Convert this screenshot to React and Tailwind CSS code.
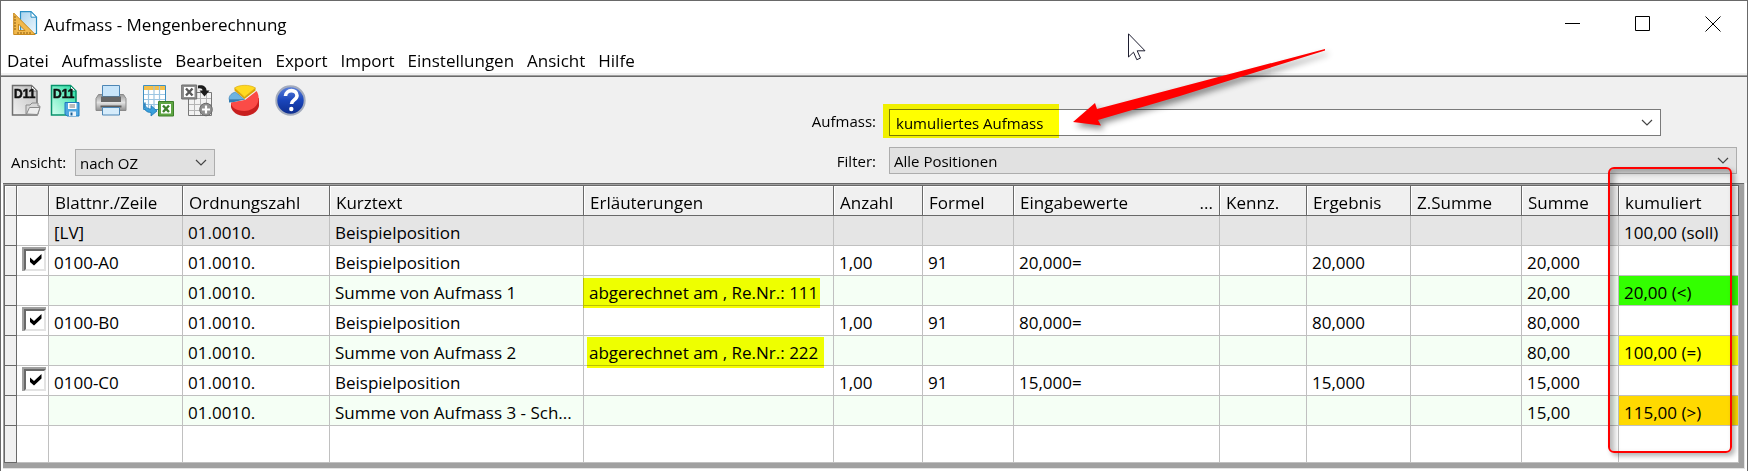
import React from 'react';

const menuItems = ['Datei', 'Aufmassliste', 'Bearbeiten', 'Export', 'Import', 'Einstellungen', 'Ansicht', 'Hilfe'];

const columns = [
  { key: 'marker', width: 'w-3' },
  { key: 'check', width: 'w-8' },
  { key: 'blatt', label: 'Blattnr./Zeile', width: 'w-[134px]' },
  { key: 'oz', label: 'Ordnungszahl', width: 'w-[147px]' },
  { key: 'kurztext', label: 'Kurztext', width: 'w-[254px]' },
  { key: 'info', label: 'Erläuterungen', width: 'w-[250px]' },
  { key: 'anzahl', label: 'Anzahl', width: 'w-[89px]' },
  { key: 'formel', label: 'Formel', width: 'w-[91px]' },
  { key: 'eingabe', label: 'Eingabewerte', more: true, width: 'w-[206px]' },
  { key: 'kennz', label: 'Kennz.', width: 'w-[87px]' },
  { key: 'ergebnis', label: 'Ergebnis', width: 'w-[104px]' },
  { key: 'zsumme', label: 'Z.Summe', width: 'w-[111px]' },
  { key: 'summe', label: 'Summe', width: 'w-[97px]' },
  { key: 'kumuliert', label: 'kumuliert', width: 'w-[120px]' }
];

const dataColumns = columns.slice(2);

const rows = [
  { type: 'lv', blatt: '[LV]', oz: '01.0010.', kurztext: 'Beispielposition', kumuliert: '100,00 (soll)' },
  { type: 'pos', blatt: '0100-A0', oz: '01.0010.', kurztext: 'Beispielposition', anzahl: '1,00', formel: '91', eingabe: '20,000=', ergebnis: '20,000', summe: '20,000' },
  { type: 'sum', oz: '01.0010.', kurztext: 'Summe von Aufmass 1', info: 'abgerechnet am , Re.Nr.: 111', mark: '-left-px top-0.5 h-[30px]', summe: '20,00', kumuliert: '20,00 (<)', status: 'bg-[#33ff00]' },
  { type: 'pos', blatt: '0100-B0', oz: '01.0010.', kurztext: 'Beispielposition', anzahl: '1,00', formel: '91', eingabe: '80,000=', ergebnis: '80,000', summe: '80,000' },
  { type: 'sum', oz: '01.0010.', kurztext: 'Summe von Aufmass 2', info: 'abgerechnet am , Re.Nr.: 222', mark: 'left-[3px] top-px h-[31px]', summe: '80,00', kumuliert: '100,00 (=)', status: 'bg-[#ffff00]' },
  { type: 'pos', blatt: '0100-C0', oz: '01.0010.', kurztext: 'Beispielposition', anzahl: '1,00', formel: '91', eingabe: '15,000=', ergebnis: '15,000', summe: '15,000' },
  { type: 'sum', oz: '01.0010.', kurztext: 'Summe von Aufmass 3 - Sch...', summe: '15,00', kumuliert: '115,00 (>)', status: 'bg-[#ffd900]' }
];

const rowColors = {
  lv: 'bg-[#e5e5e5]',
  pos: 'bg-white',
  sum: 'bg-[#f5fff5]'
};

const AppIcon = () => (
  <svg width="25" height="25" viewBox="0 0 25 25" aria-hidden="true">
    <defs>
      <linearGradient id="sheet" x1="0" y1="0" x2="1" y2="1">
        <stop offset="0" stopColor="#a9d3ee" />
        <stop offset="1" stopColor="#eef8fe" />
      </linearGradient>
    </defs>
    <path d="M7.5.7H18l5.500 5.500v16.300h-16z" fill="url(#sheet)" stroke="#2b8fc4" strokeWidth="1.2" />
    <path d="M18 .7v5.500h5.500z" fill="#fff" stroke="#2b8fc4" strokeWidth="1" />
    <path d="M.7 2v21.500h21.500z M5.500 13v6.500h6.500z" fill="#f2b94d" fillRule="evenodd" stroke="#c98a1d" strokeWidth="1" />
    <path d="M1 6h2M1 9h2M1 12h2M1 15h2M1 18h2M5 23v-2M8 23v-2M11 23v-2M14 23v-2M17 23v-2" stroke="#8a5c10" strokeWidth="1" />
  </svg>
);

const DocIcon = ({ id, from, to, edge, children }) => (
  <svg width="30" height="33" viewBox="0 0 30 33" aria-hidden="true">
    <defs>
      <linearGradient id={id} x1="1" y1="0" x2="0" y2="1">
        <stop offset="0" stopColor={from} />
        <stop offset="1" stopColor={to} />
      </linearGradient>
    </defs>
    <path d="M1.500 1.500h19l5.500 5.500v24h-24.500z" fill={`url(#${id})`} stroke={edge} strokeWidth="1.5" />
    <path d="M20.500 1.500v5.500h5.500z" fill="#fff" stroke={edge} />
    <text x="3" y="14" fontFamily="'Liberation Sans', sans-serif" fontSize="12" fontWeight="700" fill="#111" stroke="#111" strokeWidth=".5">D11</text>
    {children}
  </svg>
);

const OpenIcon = () => (
  <DocIcon id="docOpen" from="#bdbdbd" to="#f2f2f2" edge="#6e6e6e">
    <path d="M15 30.500v-9.500h4l2-2h6v3h2l-2 8.500z" fill="#d6d6d6" stroke="#8a8a8a" />
    <path d="M15.500 30l3-6.500h10.500l-2.500 7z" fill="#ededed" stroke="#8a8a8a" />
  </DocIcon>
);

const SaveIcon = () => (
  <DocIcon id="docSave" from="#22dda0" to="#d5fff0" edge="#07936c">
    <path d="M15 18.500h14v13.500h-12l-2-2z" fill="#4ea6e0" stroke="#1d7cc0" />
    <path d="M18 19h8.500v6h-8.500z" fill="#fff" />
    <path d="M19.500 21h5.500M19.500 23h5.500" stroke="#777" />
    <path d="M19 27.500h7v4.500h-7z" fill="#e8f3fb" />
    <path d="M20.500 28.500h2v3h-2z" fill="#1d5f95" />
  </DocIcon>
);

const PrinterIcon = () => (
  <svg width="32" height="33" viewBox="0 0 32 33" aria-hidden="true">
    <defs>
      <linearGradient id="printer" x1="0" y1="0" x2="0" y2="1">
        <stop offset="0" stopColor="#9a9a9a" />
        <stop offset=".5" stopColor="#e2e2e2" />
        <stop offset="1" stopColor="#8f8f8f" />
      </linearGradient>
    </defs>
    <path d="M3.500 10.500h25l2.500 4v12H1v-12z" fill="url(#printer)" stroke="#8a8a8a" />
    <path d="M7.500 1.500h17v11h-17z" fill="#c8e5fa" stroke="#4d86b5" />
    <path d="M6 12.500h20v5.500H6z" fill="#666" />
    <path d="M5.500 21.500h21v2h-21z" fill="#5c5c5c" />
    <path d="M7.500 23.500h17v7.500h-17z" fill="#d6ecfb" stroke="#4d86b5" />
  </svg>
);

const ExcelExportIcon = () => (
  <svg width="32" height="33" viewBox="0 0 32 33" aria-hidden="true">
    <path d="M1.500 1.500h22v24h-22z" fill="#fff" stroke="#3d8fc2" />
    <path d="M2 2h21v4H2z" fill="#f5c04a" />
    <path d="M2 10.500h21M2 15.500h21M2 20.500h21M6.500 6v19M12 2v23M17.500 2v23" stroke="#9cc5e2" strokeWidth="1.2" />
    <path d="M3 18.500c0 5 3 6.500 6 6.500v-3.500l6 5.500-6 5v-3.500c-5 0-8-3-6-10z" fill="#3aa0dc" stroke="#1b75b3" strokeWidth=".8" />
    <path d="M16.500 17.500h15v14.500h-15z" fill="#5fa544" stroke="#3c7f29" />
    <path d="M19 20h10v9.500H19z" fill="#fff" />
    <path d="M21 21.500l6 6.500M27 21.500l-6 6.500" stroke="#3c7f29" strokeWidth="2.4" />
  </svg>
);

const ExcelImportIcon = () => (
  <svg width="32" height="33" viewBox="0 0 32 33" aria-hidden="true">
    <path d="M7.500 8.500h23v23h-23z" fill="#f3f3f3" stroke="#777" />
    <path d="M8 14.500h22M8 20.500h22M8 26.500h22M13.500 9v22M19.500 9v22M25.500 9v22" stroke="#b5b5b5" />
    <path d="M.7 1h15v14h-15z" fill="#909090" stroke="#6a6a6a" />
    <path d="M3 3h10.500v10H3z" fill="#fff" />
    <path d="M5 4.500l6.500 7M11.500 4.500l-6.500 7" stroke="#5a5a5a" strokeWidth="2.4" />
    <path d="M17 1.500c5-1 8.500 1 8.500 5h3l-5 6-5-6h3c0-2-2-2.500-4.500-2z" fill="#1c1c1c" />
    <circle cx="25" cy="25.500" r="6.3" fill="#909090" stroke="#6a6a6a" />
    <path d="M25 21.500v8M21 25.500h8" stroke="#fff" strokeWidth="2.2" />
  </svg>
);

const ChartIcon = () => (
  <svg width="32" height="33" viewBox="0 0 32 33" aria-hidden="true">
    <path d="M3 19v4c1 5 7 9 13.500 9S30 28 31 22v-8z" fill="#c81f1f" />
    <path d="M17 16L28.500 7c4.500 6 2.500 19.500-12 20C8 27 3 23 3 18.500z" fill="#fb4b47" />
    <path d="M1 15.500C1 11 4 9 7.500 8l9 7.500z" fill="#6db3e2" stroke="#2f7bb2" strokeWidth=".6" />
    <path d="M1 15.500v3l5-.5 10.500-2.500z" fill="#2f7bb2" />
    <path d="M6.500 4C11 .5 22 .3 27.500 4L16.500 13z" fill="#ffd91f" stroke="#d7a500" strokeWidth=".6" />
    <path d="M6.500 4v2.500l10 8.500 11-8.500V4l-11 9z" fill="#dba400" />
  </svg>
);

const HelpIcon = () => (
  <svg width="32" height="33" viewBox="0 0 32 33" aria-hidden="true">
    <defs>
      <linearGradient id="ball" x1="0" y1="0" x2="0" y2="1">
        <stop offset="0" stopColor="#5f83dc" />
        <stop offset=".5" stopColor="#1a45ba" />
        <stop offset="1" stopColor="#0d2c8c" />
      </linearGradient>
    </defs>
    <circle cx="15.500" cy="16.500" r="14.200" fill="url(#ball)" stroke="#a3abbd" strokeWidth="2" />
    <path d="M10.500 12c.3-7 11.500-7.200 11.500-.5 0 4.500-5.500 4.200-5.500 8.500" fill="none" stroke="#fff" strokeWidth="3.6" />
    <circle cx="16.300" cy="25" r="2.200" fill="#fff" />
  </svg>
);

const Select = ({ id, value, className }) => (
  <div className={`relative ${className}`}>
    <select id={id} className="block h-full w-full appearance-none bg-transparent px-1 text-[15px] leading-6 outline-none" defaultValue={value}>
      <option>{value}</option>
    </select>
    <svg className="pointer-events-none absolute right-[7px] top-[9px]" width="12" height="8" viewBox="0 0 12 8" aria-hidden="true">
      <path d="M1 1l5 5 5-5" fill="none" stroke="#444" strokeWidth="1.2" />
    </svg>
  </div>
);

const ToolButton = ({ label, icon: Icon }) => (
  <button type="button" aria-label={label} className="block">
    <Icon />
  </button>
);

const CheckCell = ({ row }) => (
  <td className="border-b border-r border-[#c0c0c0] bg-white p-0 align-top">
    {row.type === 'pos' && (
      <div className="relative ml-[5px] mt-px h-6 w-6 border-2 border-b-0 border-r-0 border-[#a0a0a0]">
        <input
          type="checkbox"
          defaultChecked
          aria-label={row.blatt}
          className="block h-[22px] w-[22px] appearance-none border-2 border-[#696969] border-b-[#e3e3e3] border-r-[#e3e3e3] bg-white"
        />
        <svg className="pointer-events-none absolute left-[6px] top-[5px]" width="12" height="12" viewBox="0 0 12 12" aria-hidden="true">
          <path d="M0 3.500l4 3.500 7.500-7v4.500L4 11.500 0 8z" fill="#000" />
        </svg>
      </div>
    )}
  </td>
);

const MassTable = () => (
  <table className="w-full table-fixed border-separate border-spacing-0 bg-white text-[17px] leading-6">
    <colgroup>
      {columns.map(col => <col key={col.key} className={col.width} />)}
    </colgroup>
    <thead>
      <tr className="h-[30px]">
        {columns.map(col => (
          <th key={col.key} className="border-b border-r border-[#696969] bg-[#f0f0f0] p-0 text-left align-top font-normal shadow-[inset_1px_1px_0_#fff]">
            <div className="flex justify-between whitespace-nowrap px-1.5 pt-[5px]">
              <span>{col.label}</span>
              {col.more && <span>...</span>}
            </div>
          </th>
        ))}
      </tr>
    </thead>
    <tbody>
      {rows.map((row, idx) => (
        <tr key={idx} className="h-[30px]">
          <td className="border-b border-r border-[#696969] bg-[#f0f0f0] p-0"></td>
          <CheckCell row={row} />
          {dataColumns.map(col => (
            <td
              key={col.key}
              className={`relative border-b border-r border-[#c0c0c0] p-0 align-top ${col.key === 'kumuliert' && row.status ? row.status : rowColors[row.type]}`}
            >
              <div className="whitespace-nowrap pl-[5px] pt-[5px]">{row[col.key]}</div>
              {col.key === 'info' && row.mark && (
                <span className={`absolute z-10 w-[237px] bg-[#f8ff00] mix-blend-multiply ${row.mark}`}></span>
              )}
            </td>
          ))}
        </tr>
      ))}
      <tr className="h-[37px]">
        <td className="border-b border-r border-[#696969] bg-[#f0f0f0] p-0"></td>
        {columns.slice(1).map(col => <td key={col.key} className="border-b border-r border-[#c0c0c0] p-0"></td>)}
      </tr>
    </tbody>
  </table>
);

// Red arrow pointing at the selected Aufmass
const Arrow = () => (
  <svg className="pointer-events-none absolute left-[1059px] top-[39px] overflow-visible" width="280" height="100" viewBox="1060 40 280 100" aria-hidden="true">
    <path
      d="M1325 49L1097 109L1095 103L1073 122L1101 125.500L1098 120L1180 96L1325 50.500z"
      fill="#ff0000"
      className="drop-shadow-[3px_4px_3px_rgba(0,0,0,0.45)]"
    />
  </svg>
);

const Pointer = () => (
  <svg className="pointer-events-none absolute left-[1127px] top-8" width="19" height="28" viewBox="0 0 19 28" aria-hidden="true">
    <path d="M.5.8v23.200l5-4.800 3.300 7.500 3.700-1.600-3.300-7.300h7.800z" fill="#fff" stroke="#1d1d30" />
  </svg>
);

export default function App() {
  return (
    <div className="relative border border-[#696969] bg-white font-['Open_Sans','Noto_Sans',sans-serif] text-black">
      <header className="flex h-[46px] items-start justify-between pl-3 pr-[26px] pt-2.5">
        <div className="flex items-start gap-1.5">
          <AppIcon />
          <h1 className="text-[17px] leading-7">Aufmass - Mengenberechnung</h1>
        </div>
        <div className="flex gap-[54px] pt-[5px]">
          <button type="button" aria-label="Minimieren">
            <svg width="16" height="16" viewBox="0 0 16 16"><path d="M0 7.500h15" stroke="#000" /></svg>
          </button>
          <button type="button" aria-label="Maximieren">
            <svg width="16" height="16" viewBox="0 0 16 16"><path d="M.5.500h14v14H.5z" fill="none" stroke="#000" /></svg>
          </button>
          <button type="button" aria-label="Schließen">
            <svg width="16" height="16" viewBox="0 0 16 16"><path d="M.5.500l15 15M15.500.500l-15 15" stroke="#000" /></svg>
          </button>
        </div>
      </header>

      <nav className="flex h-[26px] items-center gap-[13px] pl-1.5 pt-px text-[17px] leading-6">
        {menuItems.map(item => <button key={item} type="button">{item}</button>)}
      </nav>

      <div className="h-1 border-b border-[#696969] bg-[#f0f0f0] shadow-[inset_0_-1px_0_#a0a0a0]"></div>

      <div className="flex h-[106px] bg-[#f0f0f0]">
        <div className="flex w-[788px] shrink-0 flex-col justify-between pb-[7px] pl-2.5 pt-[7px]">
          <div className="flex">
            <div className="flex gap-[9px]">
              <ToolButton label="Öffnen" icon={OpenIcon} />
              <ToolButton label="Speichern" icon={SaveIcon} />
            </div>
            <div className="ml-[15px] flex gap-[15px]">
              <ToolButton label="Drucken" icon={PrinterIcon} />
              <div className="flex gap-[7px]">
                <ToolButton label="Excel-Export" icon={ExcelExportIcon} />
                <ToolButton label="Excel-Import" icon={ExcelImportIcon} />
              </div>
              <ToolButton label="Auswertung" icon={ChartIcon} />
              <ToolButton label="Hilfe" icon={HelpIcon} />
            </div>
          </div>
          <div className="flex items-center">
            <label htmlFor="ansicht" className="w-16 pb-0.5 text-[15px] leading-6">Ansicht:</label>
            <Select id="ansicht" value="nach OZ" className="h-[27px] w-[140px] border border-[#adadad] bg-[#e1e1e1]" />
          </div>
        </div>

        <div className="flex flex-1 flex-col gap-[11px] pr-2.5 pt-8">
          <div className="flex h-[27px] items-center pr-[76px]">
            <label htmlFor="aufmass" className="w-[87px] pb-[3px] text-right text-[15px] leading-6">Aufmass:</label>
            <div className="relative ml-[13px] flex-1">
              <Select id="aufmass" value="kumuliertes Aufmass" className="h-[27px] border border-[#7a7a7a] bg-white pl-0.5" />
              <span className="pointer-events-none absolute -left-1.5 -top-[5px] h-[34px] w-[176px] bg-[#ffff00] mix-blend-multiply"></span>
            </div>
          </div>
          <div className="flex h-[27px] items-center">
            <label htmlFor="filter" className="w-[87px] text-right text-[15px] leading-6">Filter:</label>
            <Select id="filter" value="Alle Positionen" className="ml-[13px] h-[27px] flex-1 border border-[#adadad] bg-[#e1e1e1]" />
          </div>
        </div>
      </div>

      <main className="mx-0.5 mb-0.5 border-b border-r border-[#e3e3e3] bg-[#a0a0a0]">
        <div className="border-t border-[#696969] pb-[5px] pl-px pr-[5px] pt-px">
          <div className="border-l border-t border-[#696969]">
            <MassTable />
          </div>
        </div>
      </main>

      <div className="pointer-events-none absolute bottom-[18px] right-[15px] top-[166px] w-[124px] rounded-md border-2 border-[#ff0000] shadow-[3px_3px_5px_rgba(0,0,0,0.3),inset_4px_4px_6px_rgba(0,0,0,0.3)]"></div>
      <Arrow />
      <Pointer />
    </div>
  );
}
